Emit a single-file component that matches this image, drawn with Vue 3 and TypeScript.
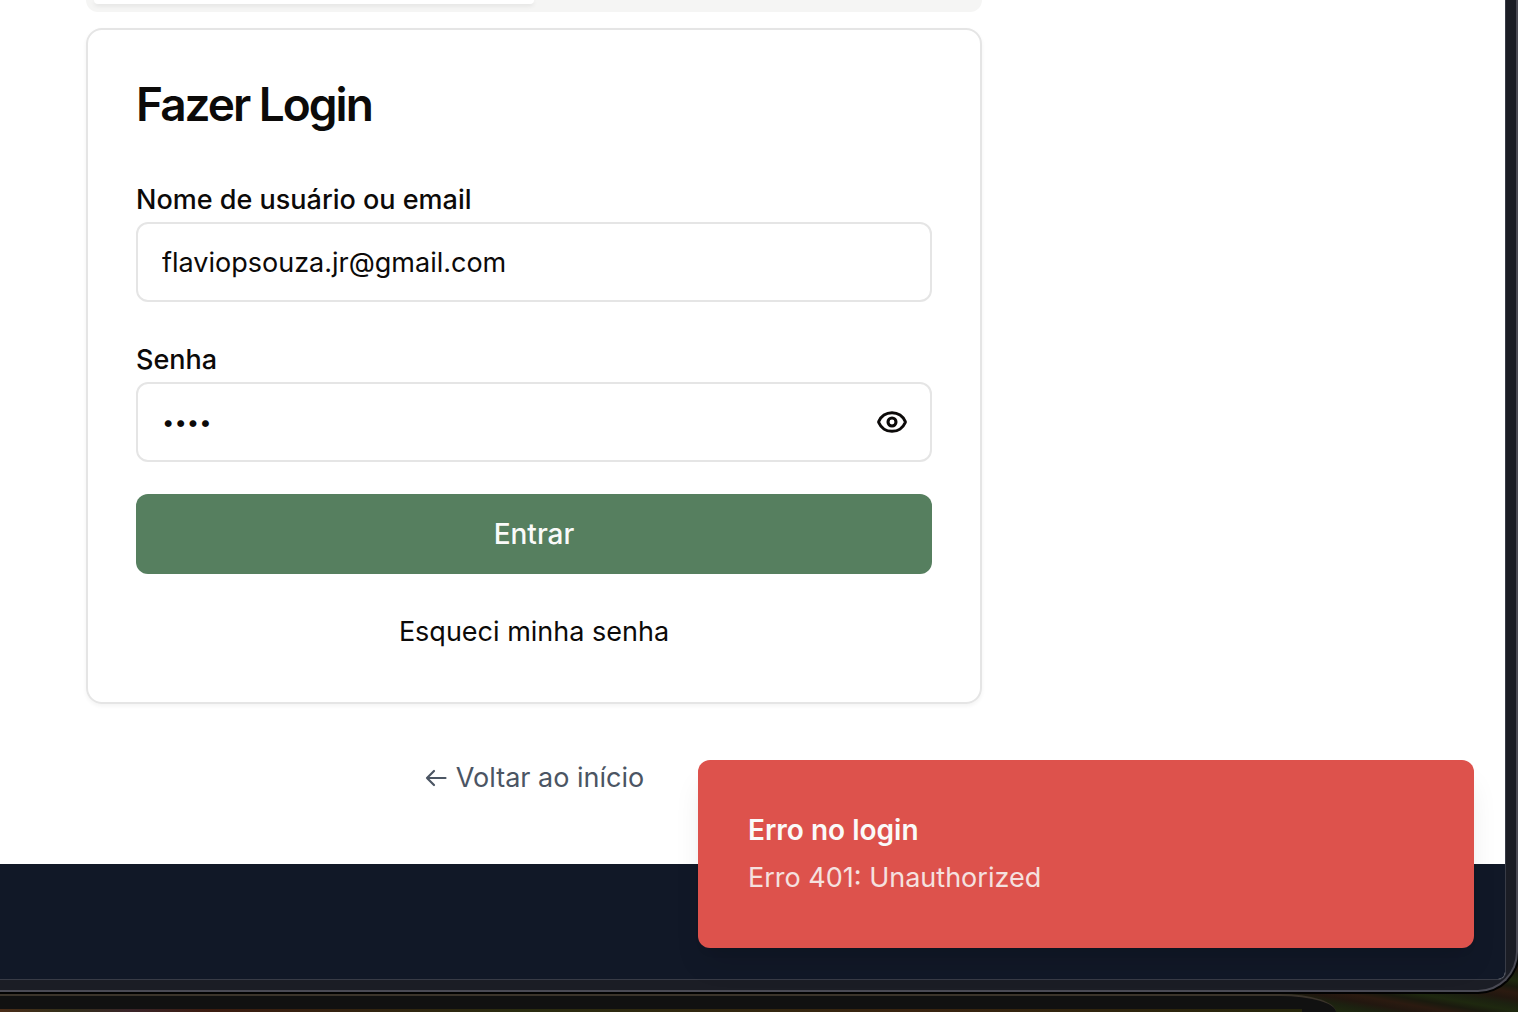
<script setup lang="ts">
import { ref } from 'vue'

const identifier = ref('flaviopsouza.jr@gmail.com')
const password = ref('1234')
const passwordVisible = ref(false)

const toast = { title: 'Erro no login', description: 'Erro 401: Unauthorized' }
</script>

<template>
  <div class="desktop">
    <div class="window">
      <div class="page">
        <main class="main">
          <div class="column">
            <div class="tabs"><div class="tab-active"></div></div>
            <form class="card" @submit.prevent>
              <h1>Fazer Login</h1>
              <div class="fields">
                <div class="field">
                  <label for="identifier">Nome de usuário ou email</label>
                  <input id="identifier" v-model="identifier" type="text" class="input" />
                </div>
                <div class="field">
                  <label for="password">Senha</label>
                  <div class="input password">
                    <input id="password" v-model="password" :type="passwordVisible ? 'text' : 'password'" />
                    <button type="button" class="eye" aria-label="Mostrar senha" @click="passwordVisible = !passwordVisible">
                      <svg viewBox="0 0 24 24" fill="none" stroke="currentColor" stroke-width="2.3" stroke-linecap="round" stroke-linejoin="round">
                        <path d="M2.062 12.348a1 1 0 0 1 0-.696 10.75 10.75 0 0 1 19.876 0 1 1 0 0 1 0 .696 10.75 10.75 0 0 1-19.876 0" />
                        <circle cx="12" cy="12" r="3" />
                      </svg>
                    </button>
                  </div>
                </div>
              </div>
              <button type="submit" class="submit">Entrar</button>
              <a href="#" class="forgot">Esqueci minha senha</a>
            </form>
            <a href="#" class="back">
              <svg viewBox="0 0 24 24" fill="none" stroke="currentColor" stroke-width="2.2" stroke-linecap="round" stroke-linejoin="round">
                <path d="M10 5 3 12l7 7M3 12h18.5" />
              </svg>
              <span>Voltar ao início</span>
            </a>
          </div>
        </main>
        <footer class="footer"></footer>
      </div>
      <div class="toast" role="alert">
        <strong>{{ toast.title }}</strong>
        <p>{{ toast.description }}</p>
      </div>
    </div>
    <div class="behind"><div class="behind-content"></div></div>
  </div>
</template>

<style>
body {
  margin: 0;
}
</style>

<style scoped>
* {
  box-sizing: border-box;
}
.desktop {
  display: flex;
  flex-direction: column;
  height: 100vh;
  overflow: hidden;
  background: repeating-linear-gradient(10deg, #1c2110 0, #22170f 6px, #2b1a10 12px, #1a1a0e 18px, #1e280f 24px, #1c2110 30px);
  color: #0c0a09;
  font-family: Inter, sans-serif;
  font-size: 27px;
  line-height: 40px;
}
.window {
  position: relative;
  flex: 1;
  display: flex;
  min-height: 0;
  padding: 0 10px 10px 0;
  background: #1b1d25;
  border: solid #4a4a54;
  border-width: 0 2px 2px 0;
  border-bottom-right-radius: 40px;
  box-shadow: 0 0 0 2px #020202;
}
.page {
  flex: 1;
  display: flex;
  flex-direction: column;
  background: #fff;
  border: solid #383b46;
  border-width: 0 1px 1px 0;
  border-bottom-right-radius: 8px;
  overflow: hidden;
}
.main {
  padding: 0 86px;
}
.column {
  display: flex;
  flex-direction: column;
  max-width: 896px;
}
.tabs {
  height: 12px;
  padding: 0 8px;
  background: #f5f5f4;
  border-radius: 0 0 12px 12px;
}
.tab-active {
  width: 50%;
  height: 4px;
  background: #fff;
  border-radius: 0 0 8px 8px;
  box-shadow: 0 2px 4px rgb(0 0 0 / 8%);
}
.card {
  display: flex;
  flex-direction: column;
  margin-top: 16px;
  padding: 48px;
  border: 2px solid #e5e5e5;
  border-radius: 16px;
  box-shadow: 0 2px 4px rgb(0 0 0 / 5%);
}
h1 {
  margin: 0 0 50px;
  font-size: 46px;
  line-height: 52px;
  font-weight: 600;
  letter-spacing: -2px;
}
.fields {
  display: flex;
  flex-direction: column;
  gap: 38px;
}
.field {
  display: flex;
  flex-direction: column;
}
label {
  margin-bottom: 2px;
  font-weight: 500;
}
.input {
  height: 80px;
  padding: 0 24px;
  background: #fff;
  border: 2px solid #e5e5e5;
  border-radius: 12px;
}
input {
  min-width: 0;
  font: inherit;
  color: inherit;
  outline: none;
}
.password {
  display: flex;
  align-items: center;
}
.password input {
  flex: 1;
  padding: 0;
  border: 0;
  background: none;
}
.password input[type='password'] {
  font-size: 22px;
}
.eye {
  display: flex;
  margin-right: -2px;
  padding: 0;
  border: 0;
  background: none;
  color: inherit;
}
.eye svg {
  width: 32px;
  height: 32px;
}
.submit {
  height: 80px;
  margin-top: 32px;
  border: 0;
  border-radius: 12px;
  background: #567f5f;
  color: #fafaf9;
  font: inherit;
  font-size: 28px;
  font-weight: 500;
}
.forgot {
  align-self: center;
  margin: 38px 0 2px;
  color: inherit;
  text-decoration: none;
}
.back {
  display: flex;
  align-items: center;
  align-self: center;
  gap: 8px;
  margin-top: 54px;
  color: #4b5563;
  text-decoration: none;
}
.back svg {
  width: 24px;
  height: 24px;
}
.footer {
  flex: 1;
  margin-top: 66px;
  background: #111827;
}
.toast {
  position: absolute;
  right: 42px;
  bottom: 42px;
  width: 776px;
  padding: 50px;
  background: #dd524c;
  border-radius: 12px;
  box-shadow: 0 20px 30px -6px rgb(0 0 0 / 10%), 0 8px 12px -8px rgb(0 0 0 / 10%);
  color: #fafaf9;
}
.toast strong {
  display: block;
  font-size: 28px;
  font-weight: 600;
}
.toast p {
  margin: 8px 0 0;
  opacity: 0.85;
}
.behind {
  width: 88%;
  height: 18px;
  margin-top: 2px;
  padding: 13px 34px 0 0;
  background: #111;
  border-top: 2px solid #3b342b;
  border-top-right-radius: 56px 18px;
}
.behind-content {
  height: 3px;
  background: linear-gradient(90deg, #4a2c18, #33301a 5%, #3a2428 10%, #3c1c10 16%, #2a2c10 40%, #3a2410 70%, #26260c);
}
</style>
